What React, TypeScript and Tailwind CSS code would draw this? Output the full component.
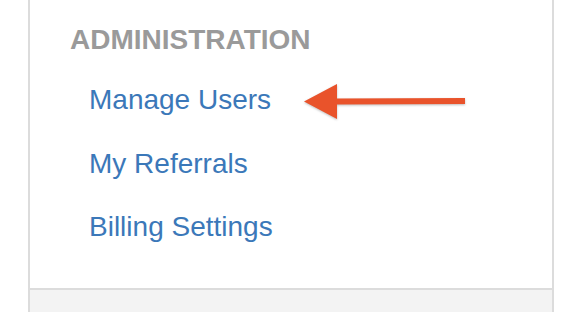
import React from "react";

const links = ["Manage Users", "My Referrals", "Billing Settings"];

const Arrow: React.FC = () => (
    <svg width="172" height="44" viewBox="0 0 172 44" className="absolute left-[268px] top-[80px] drop-shadow-[0_1px_1px_rgba(0,0,0,0.25)]">
        <path d="M6 21.5 L39 4 L39 18.5 L167 18 L167 24 L39 24.5 L39 39 Z" fill="#e9532b" />
    </svg>
);

const App: React.FC = () => {
    return (
        <div className="h-[312px] w-[574px] bg-white font-['Liberation_Sans',Arial,sans-serif]">
            <div className="relative ml-[28px] flex h-full w-[526px] flex-col border-x-2 border-[#dcdcdc]">
                <div className="h-[288px] bg-white pl-[40px] pt-[24px]">
                    <h2 className="text-[28px] font-bold leading-[32px] text-[#9a9a9a]">ADMINISTRATION</h2>
                    <ul className="mt-[28px] flex flex-col gap-[31.5px] pl-[19px]">
                        {links.map((l) => (
                            <li key={l}>
                                <a href="#" className="text-[28px] leading-[32px] text-[#3b78b9]">
                                    {l}
                                </a>
                            </li>
                        ))}
                    </ul>
                </div>
                <div className="flex-1 border-t-2 border-[#dcdcdc] bg-[#f3f3f3]" />
                <Arrow />
            </div>
        </div>
    );
};

export default App;
